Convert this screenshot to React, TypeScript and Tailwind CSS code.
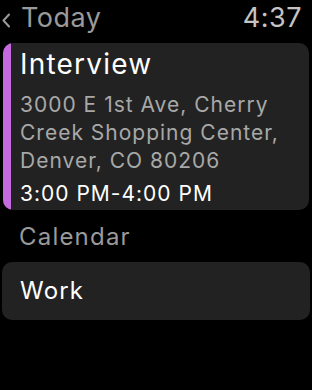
const App = () => {
    return (
        <div
            className="w-[312px] h-[390px] bg-black overflow-hidden text-white"
            style={{ fontFamily: 'Inter, "Noto Sans", sans-serif' }}
        >
            {/* Header */}
            <div className="h-[43px] flex items-start justify-between pr-[10px] pt-[1px]">
                <div className="flex items-start text-[#9a9a9a]">
                    <svg
                        width="8"
                        height="15"
                        viewBox="0 0 8 15"
                        className="ml-[2px] mr-[11px] mt-[12px]"
                        fill="none"
                        stroke="currentColor"
                        strokeWidth="2"
                        strokeLinecap="round"
                        strokeLinejoin="round"
                    >
                        <polyline points="7,1.5 1.5,7.5 7,13.5" />
                    </svg>
                    <span className="text-[27px] leading-[34px] tracking-[0.5px]">Today</span>
                </div>
                <span className="text-[27px] leading-[34px] text-[#c4c4c4] tracking-[0.5px]">4:37</span>
            </div>

            {/* Event card */}
            <div className="mx-[3px] rounded-[10px] bg-[#222222] overflow-hidden flex h-[167px]">
                <div className="w-[8px] bg-[#c56ae0] shrink-0" />
                <div className="pl-[9px] pt-[5px] pr-2">
                    <h1 className="text-[28px] leading-[32px] tracking-[1.2px]">Interview</h1>
                    <p className="text-[21px] leading-[28px] text-[#a8a8a8] tracking-[1px] mt-[11px]">
                        3000 E 1st Ave, Cherry
                        <br />
                        Creek Shopping Center,
                        <br />
                        Denver, CO 80206
                    </p>
                    <p className="text-[21px] leading-[28px] tracking-[1px] mt-[5px]">3:00 PM-4:00 PM</p>
                </div>
            </div>

            {/* Calendar */}
            <div className="pl-[19px] pt-[12px] h-[52px] text-[24px] leading-[30px] text-[#9a9a9a] tracking-[1.2px]">
                Calendar
            </div>
            <div className="mx-[2px] rounded-[10px] bg-[#222222] h-[58px] flex items-center pl-[18px] text-[24px] leading-[30px] tracking-[1.2px]">
                Work
            </div>
        </div>
    );
};

export default App;
